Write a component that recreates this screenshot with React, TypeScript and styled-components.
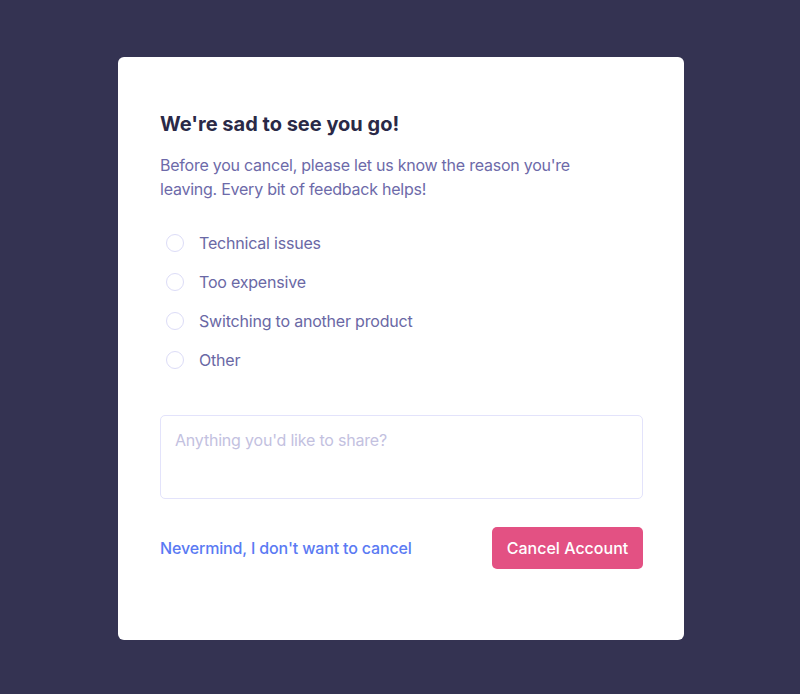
import React from "react";
import styled, { createGlobalStyle } from "styled-components";

const GlobalStyle = createGlobalStyle`
  html, body { margin: 0; padding: 0; }
  body {
    background: #343352;
    font-family: Inter, "Noto Sans", Arial, sans-serif;
    -webkit-font-smoothing: antialiased;
  }
  * { box-sizing: border-box; }
`;

const Page = styled.div`
  min-height: 694px;
  display: flex;
  justify-content: center;
  align-items: flex-start;
  padding-top: 57px;
  padding-left: 2px;
`;

const Card = styled.div`
  width: 566px;
  height: 583px;
  background: #ffffff;
  border-radius: 6px;
  padding: 53px 41px 0 42px;
  display: flex;
  flex-direction: column;
`;

const Title = styled.h2`
  margin: 0 0 15px;
  font-size: 20px;
  line-height: 28px;
  font-weight: 700;
  color: #2a2947;
  letter-spacing: 0;
`;

const Intro = styled.p`
  margin: 0;
  font-size: 16px;
  line-height: 24px;
  color: #6d6aa9;
  letter-spacing: -0.24px;
  max-width: 430px;
`;

const Options = styled.div`
  margin-top: 22px;
  display: flex;
  flex-direction: column;
`;

const Option = styled.label`
  display: flex;
  align-items: center;
  height: 39px;
  padding-left: 6px;
  font-size: 16px;
  letter-spacing: -0.2px;
  color: #6a68a5;
  cursor: pointer;
`;

const Radio = styled.span`
  width: 18px;
  height: 18px;
  border-radius: 50%;
  border: 1.5px solid #dcdcf7;
  margin-right: 15px;
  flex-shrink: 0;
`;

const TextArea = styled.textarea`
  margin-top: 36px;
  width: 100%;
  height: 84px;
  border: 1.5px solid #e3e3fb;
  border-radius: 5px;
  padding: 14px 14px;
  font-family: inherit;
  font-size: 16px;
  line-height: 20px;
  letter-spacing: -0.2px;
  color: #6a68a5;
  resize: none;
  outline: none;
  &::placeholder {
    color: #c3c1df;
  }
`;

const Footer = styled.div`
  margin-top: 28px;
  display: flex;
  justify-content: space-between;
  align-items: center;
`;

const LinkButton = styled.a`
  font-size: 16px;
  font-weight: 500;
  letter-spacing: -0.15px;
  color: #5a7af3;
  text-decoration: none;
  cursor: pointer;
`;

const DangerButton = styled.button`
  width: 151px;
  height: 42px;
  border: none;
  border-radius: 5px;
  background: #e35183;
  color: #ffffff;
  font-family: inherit;
  font-size: 16px;
  font-weight: 500;
  cursor: pointer;
`;

const reasons = [
  "Technical issues",
  "Too expensive",
  "Switching to another product",
  "Other",
];

export default function App() {
  return (
    <>
      <GlobalStyle />
      <Page>
        <Card>
          <Title>We're sad to see you go!</Title>
          <Intro>
            Before you cancel, please let us know the reason you're leaving.
            Every bit of feedback helps!
          </Intro>
          <Options>
            {reasons.map((r) => (
              <Option key={r}>
                <Radio />
                {r}
              </Option>
            ))}
          </Options>
          <TextArea placeholder="Anything you'd like to share?" />
          <Footer>
            <LinkButton>Nevermind, I don't want to cancel</LinkButton>
            <DangerButton>Cancel Account</DangerButton>
          </Footer>
        </Card>
      </Page>
    </>
  );
}
